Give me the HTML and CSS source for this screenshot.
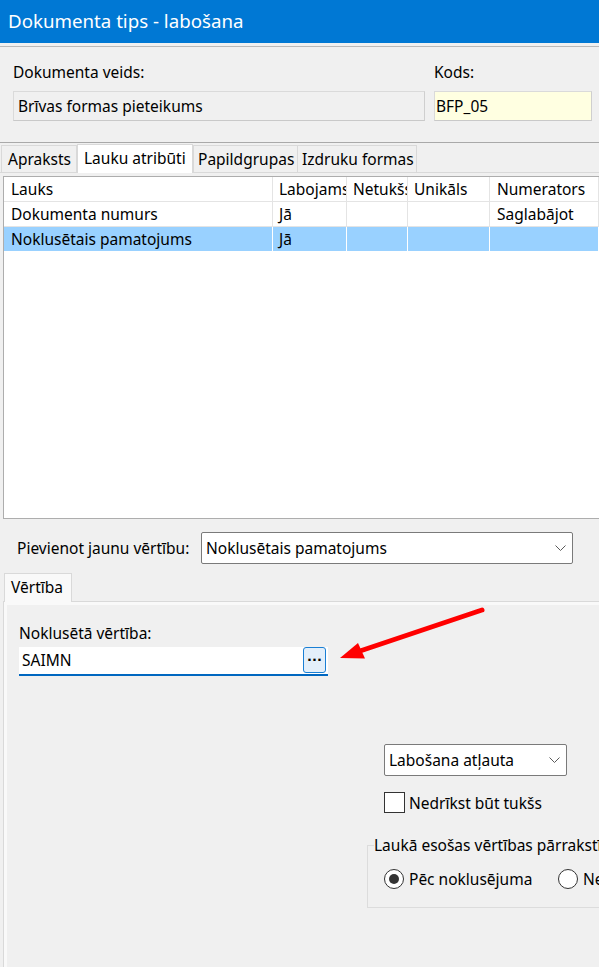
FILE: index.html
```html
<!DOCTYPE html>
<html lang="lv">
<head>
<meta charset="utf-8">
<title>Dokumenta tips - labošana</title>
<link rel="stylesheet" href="styles.css">
</head>
<body>
<div class="window">
  <header class="titlebar">Dokumenta tips - labošana</header>

  <section class="head-fields">
    <div class="field field-type">
      <div class="lbl">Dokumenta veids:</div>
      <div class="box box-readonly">Brīvas formas pieteikums</div>
    </div>
    <div class="field field-code">
      <div class="lbl">Kods:</div>
      <div class="box box-code">BFP_05</div>
    </div>
  </section>

  <nav class="tabs">
    <div class="tab tab-desc">Apraksts</div>
    <div class="tab tab-attr active">Lauku atribūti</div>
    <div class="tab tab-groups">Papildgrupas</div>
    <div class="tab tab-print">Izdruku formas</div>
  </nav>

  <div class="tabpage-top">
    <div class="grid">
      <div class="row head">
        <div class="cell c1">Lauks</div>
        <div class="cell">Labojams</div>
        <div class="cell">Netukšs</div>
        <div class="cell">Unikāls</div>
        <div class="cell c5">Numerators</div>
      </div>
      <div class="row">
        <div class="cell c1">Dokumenta numurs</div>
        <div class="cell">Jā</div>
        <div class="cell"></div>
        <div class="cell"></div>
        <div class="cell c5">Saglabājot</div>
      </div>
      <div class="row selected">
        <div class="cell c1">Noklusētais pamatojums</div>
        <div class="cell">Jā</div>
        <div class="cell"></div>
        <div class="cell"></div>
        <div class="cell c5"></div>
      </div>
    </div>
  </div>

  <div class="add-row">
    <div class="add-label">Pievienot jaunu vērtību:</div>
    <div class="combo combo-add">
      <span>Noklusētais pamatojums</span>
      <svg class="chev" width="11" height="6" viewBox="0 0 11 6"><polyline points="0.5,0.5 5.5,5.5 10.5,0.5" fill="none" stroke="#5a5a5a" stroke-width="1"/></svg>
    </div>
  </div>

  <div class="value-tab">Vērtība</div>
  <div class="value-page">
    <div class="value-inner">
      <div class="lbl">Noklusētā vērtība:</div>
      <div class="value-field">
        <span class="value-text">SAIMN</span>
        <button class="dots">···</button>
      </div>

      <div class="options">
        <div class="combo combo-edit">
          <span>Labošana atļauta</span>
          <svg class="chev" width="11" height="6" viewBox="0 0 11 6"><polyline points="0.5,0.5 5.5,5.5 10.5,0.5" fill="none" stroke="#5a5a5a" stroke-width="1"/></svg>
        </div>
        <label class="check-row">
          <span class="checkbox"></span>
          <span>Nedrīkst būt tukšs</span>
        </label>
      </div>

      <fieldset class="group">
        <legend>Laukā esošas vērtības pārrakstīšana</legend>
        <div class="radios">
          <div class="radio-item first"><span class="radio on"></span><span>Pēc noklusējuma</span></div>
          <div class="radio-item"><span class="radio"></span><span>Nekad</span></div>
        </div>
      </fieldset>
    </div>
  </div>

  <svg class="pointer" width="170" height="72" viewBox="0 0 170 72">
    <line x1="152" y1="10" x2="30" y2="51" stroke="#ff0000" stroke-width="5" stroke-linecap="round"/>
    <polygon points="10,58 28,43 35,58.5" fill="#ff0000"/>
  </svg>
</div>
</body>
</html>
```

FILE: styles.css
```css
* { box-sizing: border-box; }

html, body {
  margin: 0;
  padding: 0;
  overflow: hidden;
}

body {
  background: #f0f0f0;
  font-family: "Noto Sans", "Segoe UI", sans-serif;
  font-size: 15.5px;
  line-height: 20px;
  color: #000;
}

.window {
  position: relative;
  width: 640px;
  height: 967px;
}

/* window caption */
.titlebar {
  height: 43px;
  background: #0078d4;
  color: #fff;
  font-size: 18.7px;
  line-height: 42px;
  padding-left: 8px;
  margin-bottom: 3px;
}

/* document type + code */
.head-fields {
  display: flex;
  gap: 9px;
  padding: 15px 0 21px 13px;
  border-top: 1px solid #b9b9b9;
  border-bottom: 1px solid #a9a9a9;
}

.field-type { width: 412px; }
.field-code { width: 158px; }

.lbl {
  height: 20px;
  margin-bottom: 9px;
  white-space: nowrap;
}

.box {
  height: 30px;
  line-height: 28px;
  padding-left: 4px;
  border: 1px solid #dadada;
  border-bottom-color: #c9c9c9;
  border-right-color: #cfcfcf;
}

.box-readonly { background: #f0f0f0; }
.box-code { background: #ffffe1; padding-left: 1px; }

/* tab strip */
.tabs {
  display: flex;
  align-items: flex-end;
  height: 29px;
  padding-left: 1px;
  position: relative;
  z-index: 1;
}

.tab {
  height: 27px;
  line-height: 26px;
  padding-left: 4px;
  border: 1px solid #d9d9d9;
  border-bottom: 0;
  background: #f0f0f0;
  white-space: nowrap;
  overflow: hidden;
}

.tab + .tab { border-left: 0; }

.tab-desc { width: 76px; padding-left: 6px; }
.tab-attr { width: 116px; padding-left: 6px; }
.tab-groups { width: 105px; }
.tab-print { width: 119px; }

.tab.active {
  height: 29px;
  margin-bottom: -1px;
  background: #fff;
  border-left: 1px solid #d9d9d9;
  line-height: 26px;
}

.tab.active + .tab { border-left: 1px solid #d9d9d9; }

/* grid page */
.tabpage-top {
  border-top: 1px solid #d9d9d9;
  padding: 3px 0 0 3px;
}

.grid {
  width: 630px;
  height: 343px;
  border: 1px solid #adadad;
  background: #fff;
}

.row {
  display: grid;
  grid-template-columns: 269px 74px 61px 82px 109px;
  height: 25px;
}

.cell {
  height: 25px;
  line-height: 24px;
  padding-left: 6px;
  border-right: 1px solid #e4e4e4;
  border-bottom: 1px solid #e4e4e4;
  white-space: nowrap;
  overflow: hidden;
}

.c1 { padding-left: 7px; }
.c5 { padding-left: 7px; }

.row.selected .cell {
  background: #99d1ff;
  border-right-color: #fff;
  border-bottom-color: #fff;
}

/* add value row */
.add-row {
  display: grid;
  grid-template-columns: 184px 372px;
  align-items: center;
  padding: 13px 0 0 17px;
}

.add-label { white-space: nowrap; }

.combo {
  display: flex;
  align-items: center;
  justify-content: space-between;
  height: 32px;
  background: #fff;
  border: 1px solid #7a7a7a;
  border-radius: 2px;
  padding: 0 6px 0 4px;
  white-space: nowrap;
}

.chev { flex: none; }

/* value tab */
.value-tab {
  position: relative;
  z-index: 1;
  width: 68px;
  height: 29px;
  margin: 9px 0 -1px 4px;
  padding-left: 6px;
  line-height: 27px;
  background: #f9f9f9;
  border: 1px solid #d9d9d9;
  border-bottom: 0;
}

.value-page {
  margin-left: 3px;
  height: 400px;
  border: 1px solid #d9d9d9;
  background: #f9f9f9;
  padding: 3px 0 0 3px;
}

.value-inner {
  height: 100%;
  background: #f0f0f0;
  padding: 18px 0 0 12px;
}

.value-inner .lbl { margin-bottom: 4px; }

.value-field {
  display: flex;
  width: 309px;
  height: 29px;
  background: #fff;
  border-bottom: 2px solid #0067c0;
}

.value-text {
  padding-left: 3px;
  line-height: 27px;
}

.dots {
  margin: 0 2px 0 auto;
  width: 23px;
  height: 26px;
  padding: 0;
  border: 1px solid #1a7fd4;
  border-radius: 3px;
  background: #e3effa;
  font-family: "DejaVu Sans", sans-serif;
  font-size: 13px;
  font-weight: bold;
  line-height: 22px;
  color: #000;
}

/* right-side options */
.options {
  margin: 68px 0 0 365px;
}

.combo-edit { width: 183px; }

.check-row {
  display: flex;
  align-items: center;
  gap: 4px;
  margin-top: 16px;
  height: 21px;
  white-space: nowrap;
}

.checkbox {
  width: 21px;
  height: 21px;
  background: #fff;
  border: 1px solid #333;
}

.group {
  width: 300px;
  margin: 22px 0 0 348px;
  padding: 0 0 18px 6px;
  border: 1px solid #dcdcdc;
}

.group legend {
  padding: 0;
  white-space: nowrap;
  line-height: 20px;
}

.radios {
  display: flex;
  margin: 14px 0 0 10px;
  height: 20px;
}

.radio-item {
  display: flex;
  align-items: center;
  gap: 5px;
  white-space: nowrap;
}

.radio-item.first { width: 174px; }

.radio {
  display: flex;
  align-items: center;
  justify-content: center;
  width: 20px;
  height: 20px;
  border: 1px solid #333;
  border-radius: 50%;
  background: #fff;
}

.radio.on::after {
  content: "";
  width: 10px;
  height: 10px;
  border-radius: 50%;
  background: #333;
}

/* annotation arrow over the form */
.pointer {
  position: absolute;
  left: 330px;
  top: 600px;
  pointer-events: none;
}
```
